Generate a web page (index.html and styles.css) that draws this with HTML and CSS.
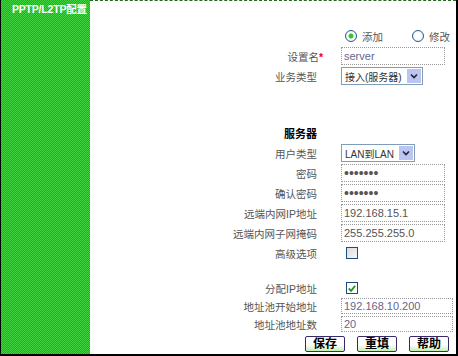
FILE: index.html
```html
<!DOCTYPE html>
<html lang="zh-cn">

<head>
    <meta charset="UTF-8">
    <title>PPTP/L2TP配置</title>
    <link rel="stylesheet" href="styles.css">
</head>

<body>
    <div class="frame">
        <div class="side">
            <div class="side-title">PPTP/L2TP配置</div>
        </div>
        <div class="main">
            <div class="row row-radio">
                <div class="lbl"></div>
                <div class="fld">
                    <span class="radio checked"></span><span class="radio-text">添加</span>
                    <span class="radio gap"></span><span class="radio-text">修改</span>
                </div>
            </div>
            <div class="row">
                <div class="lbl req">设置名<span class="star">*</span></div>
                <div class="fld"><input class="txt short" type="text" value="server"></div>
            </div>
            <div class="row">
                <div class="lbl">业务类型</div>
                <div class="fld">
                    <div class="sel sel-wide">
                        <span class="sel-text">接入(服务器)</span>
                        <span class="sel-btn"><svg width="14" height="14" viewBox="0 0 14 14"><path d="M4 5.5 L7 8.5 L10 5.5" fill="none" stroke="#223" stroke-width="1.6"/></svg></span>
                    </div>
                </div>
            </div>

            <div class="row row-head">
                <div class="lbl head">服务器</div>
                <div class="fld"></div>
            </div>
            <div class="row">
                <div class="lbl">用户类型</div>
                <div class="fld">
                    <div class="sel sel-narrow">
                        <span class="sel-text">LAN到LAN</span>
                        <span class="sel-btn"><svg width="14" height="14" viewBox="0 0 14 14"><path d="M4 5.5 L7 8.5 L10 5.5" fill="none" stroke="#223" stroke-width="1.6"/></svg></span>
                    </div>
                </div>
            </div>
            <div class="row">
                <div class="lbl">密码</div>
                <div class="fld"><input class="txt short pwd" type="password" value="1234567"></div>
            </div>
            <div class="row">
                <div class="lbl">确认密码</div>
                <div class="fld"><input class="txt short pwd" type="password" value="1234567"></div>
            </div>
            <div class="row">
                <div class="lbl">远端内网IP地址</div>
                <div class="fld"><input class="txt short dark" type="text" value="192.168.15.1"></div>
            </div>
            <div class="row">
                <div class="lbl">远端内网子网掩码</div>
                <div class="fld"><input class="txt short dark" type="text" value="255.255.255.0"></div>
            </div>
            <div class="row">
                <div class="lbl">高级选项</div>
                <div class="fld"><span class="chk"></span></div>
            </div>

            <div class="row row-chk2">
                <div class="lbl">分配IP地址</div>
                <div class="fld">
                    <span class="chk checked"><svg width="11" height="11" viewBox="0 0 11 11"><path d="M2 5.5 L4.5 8 L9 2.5" fill="none" stroke="#1a9a1a" stroke-width="2"/></svg></span>
                </div>
            </div>
            <div class="row row-sm">
                <div class="lbl">地址池开始地址</div>
                <div class="fld"><input class="txt long sm" type="text" value="192.168.10.200"></div>
            </div>
            <div class="row row-sm">
                <div class="lbl">地址池地址数</div>
                <div class="fld"><input class="txt long sm" type="text" value="20"></div>
            </div>

            <div class="buttons">
                <button type="button">保存</button>
                <button type="button">重填</button>
                <button type="button">帮助</button>
            </div>
        </div>
    </div>
</body>

</html>
```

FILE: styles.css
```css
body {
    margin: 0;
    padding: 0;
    background-color: #fff;
    font-family: "Liberation Sans", "Noto Sans CJK SC", sans-serif;
    font-size: 11px;
    color: #444;
}

.frame {
    width: 458px;
    height: 356px;
    box-sizing: border-box;
    border-left: 1px solid #000;
    border-right: 2px solid #000;
    border-bottom: 2px solid #000;
    display: flex;
}

.side {
    width: 89px;
    flex-shrink: 0;
    background-color: #36c236;
    background-image: repeating-conic-gradient(#42d242 0 25%, #2aa82a 0 50%);
    background-size: 2px 2px;
}

.side-title {
    padding: 3px 0 0 11px;
    color: #fff;
    font-weight: bold;
    font-size: 10.5px;
    letter-spacing: -0.2px;
    line-height: 12px;
}

.main {
    flex: 1;
    border-top: 1px dashed #1f6a1f;
    padding-top: 25px;
}

.row {
    display: flex;
    align-items: center;
    height: 20px;
}

.row-head {
    margin-top: 36px;
    height: 21px;
}

.row-chk2 {
    margin-top: 16px;
    height: 18px;
}

.row-sm {
    height: 18px;
}

.lbl {
    width: 227px;
    text-align: right;
    white-space: nowrap;
    font-size: 10.5px;
    color: #555;
}

.lbl.req {
    margin-right: -6px;
    width: 233px;
}

.star {
    color: #e00;
    font-weight: bold;
}

.head {
    font-weight: bold;
    color: #000;
    font-size: 11px;
}

.fld {
    margin-left: 24px;
    display: flex;
    align-items: center;
}

.row-radio .fld {
    padding-left: 4px;
}

.radio {
    width: 12px;
    height: 12px;
    box-sizing: border-box;
    border-radius: 50%;
    border: 1px solid #2a5a8a;
    background: radial-gradient(circle, #fff 40%, #dde3ea 100%);
}

.radio.checked {
    background: radial-gradient(circle, #2ec82e 0 2px, #fff 3px, #dde3ea 100%);
}

.radio.gap {
    margin-left: 29px;
}

.radio-text {
    margin-left: 5px;
    color: #555;
    font-size: 10.5px;
}

.txt {
    box-sizing: border-box;
    height: 18px;
    margin: 0;
    padding: 0 2px;
    border: 1px dotted #999;
    background-color: #fff;
    font-family: "Liberation Sans", sans-serif;
    font-size: 11px;
    color: #66668a;
    outline: none;
}

.txt.dark {
    color: #555;
}

.txt.sm {
    height: 16px;
}

.short {
    width: 104px;
}

.long {
    width: 112px;
}

.pwd {
    font-size: 14px;
    letter-spacing: 0;
    color: #555;
}

.sel {
    box-sizing: border-box;
    height: 18px;
    border: 1px solid #7f9db9;
    display: flex;
    align-items: center;
    justify-content: space-between;
    padding: 0 1px 0 3px;
    color: #333;
}

.sel-wide {
    width: 82px;
}

.sel-narrow {
    width: 74px;
}

.sel-text {
    white-space: nowrap;
    font-size: 10px;
}

.sel-btn {
    width: 14px;
    height: 14px;
    background-color: #bcc4f2;
    display: flex;
}

.chk {
    width: 12px;
    height: 12px;
    margin-left: 5px;
    box-sizing: border-box;
    border: 1px solid #1c4c7c;
    background: linear-gradient(135deg, #dcdcdc, #f6f6f6);
    display: flex;
    align-items: center;
    justify-content: center;
}

.chk.checked {
    background: #fff;
}

.buttons {
    display: flex;
    margin-top: 3px;
    padding-left: 215px;
    gap: 12px;
}

.buttons button {
    width: 40px;
    height: 16px;
    padding: 0;
    border: 1px solid #3a2a6a;
    border-radius: 2px;
    background: linear-gradient(#fff 55%, #c6efb4);
    font-family: "Liberation Sans", "Noto Sans CJK SC", sans-serif;
    font-size: 12px;
    font-weight: bold;
    color: #000;
    line-height: 14px;
}
```
